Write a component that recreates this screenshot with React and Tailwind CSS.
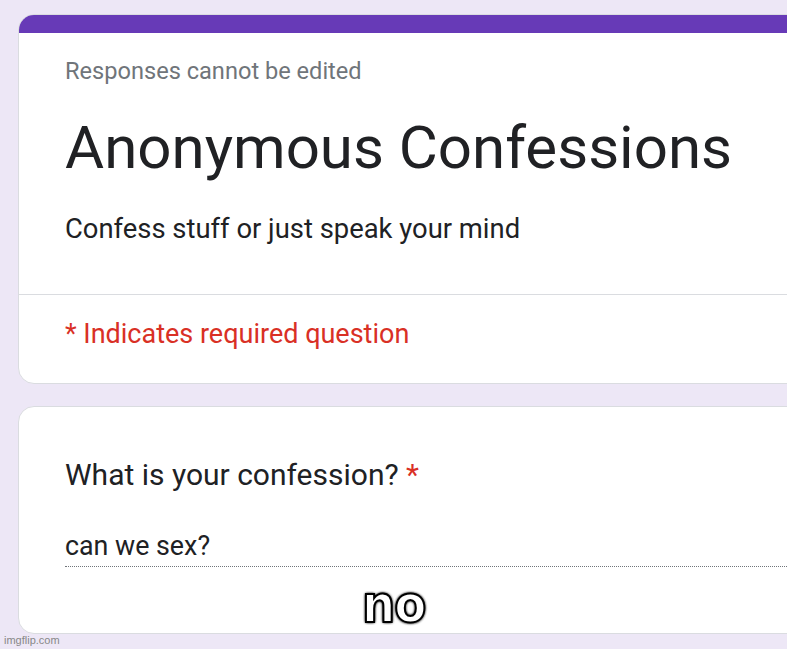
import React from 'react';

const Card = ({ children, top = false }) => (
  <div className="relative w-[830px] ml-[18px] bg-white border border-[#dadce0] rounded-[16px] overflow-hidden">
    {top && <div className="h-[19px] bg-[#673ab7] -mx-px -mt-px" />}
    {children}
  </div>
);

export default function App() {
  return (
    <div
      className="relative w-[787px] h-[649px] overflow-hidden bg-[#ede7f6]"
      style={{ fontFamily: 'Roboto, "Liberation Sans", sans-serif' }}
    >
      <div className="pt-[14px] flex flex-col gap-[22px]">
        {/* Header card */}
        <Card top>
          <div className="px-[46px] pt-[24px] pb-[49px] border-b border-[#dadce0]">
            <p className="text-[23.6px] leading-[28px] text-[#70757a]">Responses cannot be edited</p>
            <h1 className="mt-[31px] text-[60px] leading-[64px] text-[#202124]">Anonymous Confessions</h1>
            <p className="mt-[33px] text-[27.4px] leading-[32px] text-[#202124]">Confess stuff or just speak your mind</p>
          </div>
          <div className="px-[46px] pt-[22px] pb-[32px]">
            <p className="text-[27px] leading-[34px] text-[#d93025]">* Indicates required question</p>
          </div>
        </Card>

        {/* Question card */}
        <Card>
          <div className="pl-[46px] pt-[50px] pb-[66px]">
            <p className="text-[30px] leading-[36px] text-[#202124]">
              What is your confession? <span className="text-[#d93025]">*</span>
            </p>
            <div className="mt-[38px] pb-[5px] border-b border-dotted border-[#70757a]">
              <p className="text-[26.8px] leading-[30px] text-[#202124]">can we sex?</p>
            </div>
          </div>
        </Card>
      </div>

      {/* meme caption */}
      <div
        className="absolute left-[362px] top-[578px] text-[52px] leading-[52px] text-white font-bold tracking-[-1px]"
        style={{
          fontFamily: '"DejaVu Sans Condensed", "DejaVu Sans", sans-serif',
          WebkitTextStroke: '2px black',
          textShadow: '0 0 3px #000, 0 0 3px #000, 0 0 3px #000',
        }}
      >
        no
      </div>

      <div
        className="absolute left-[4px] top-[634px] text-[11px] leading-[13px] text-[#888]"
        style={{ fontFamily: '"Liberation Sans", Arial, sans-serif' }}
      >
        imgflip.com
      </div>
    </div>
  );
}
